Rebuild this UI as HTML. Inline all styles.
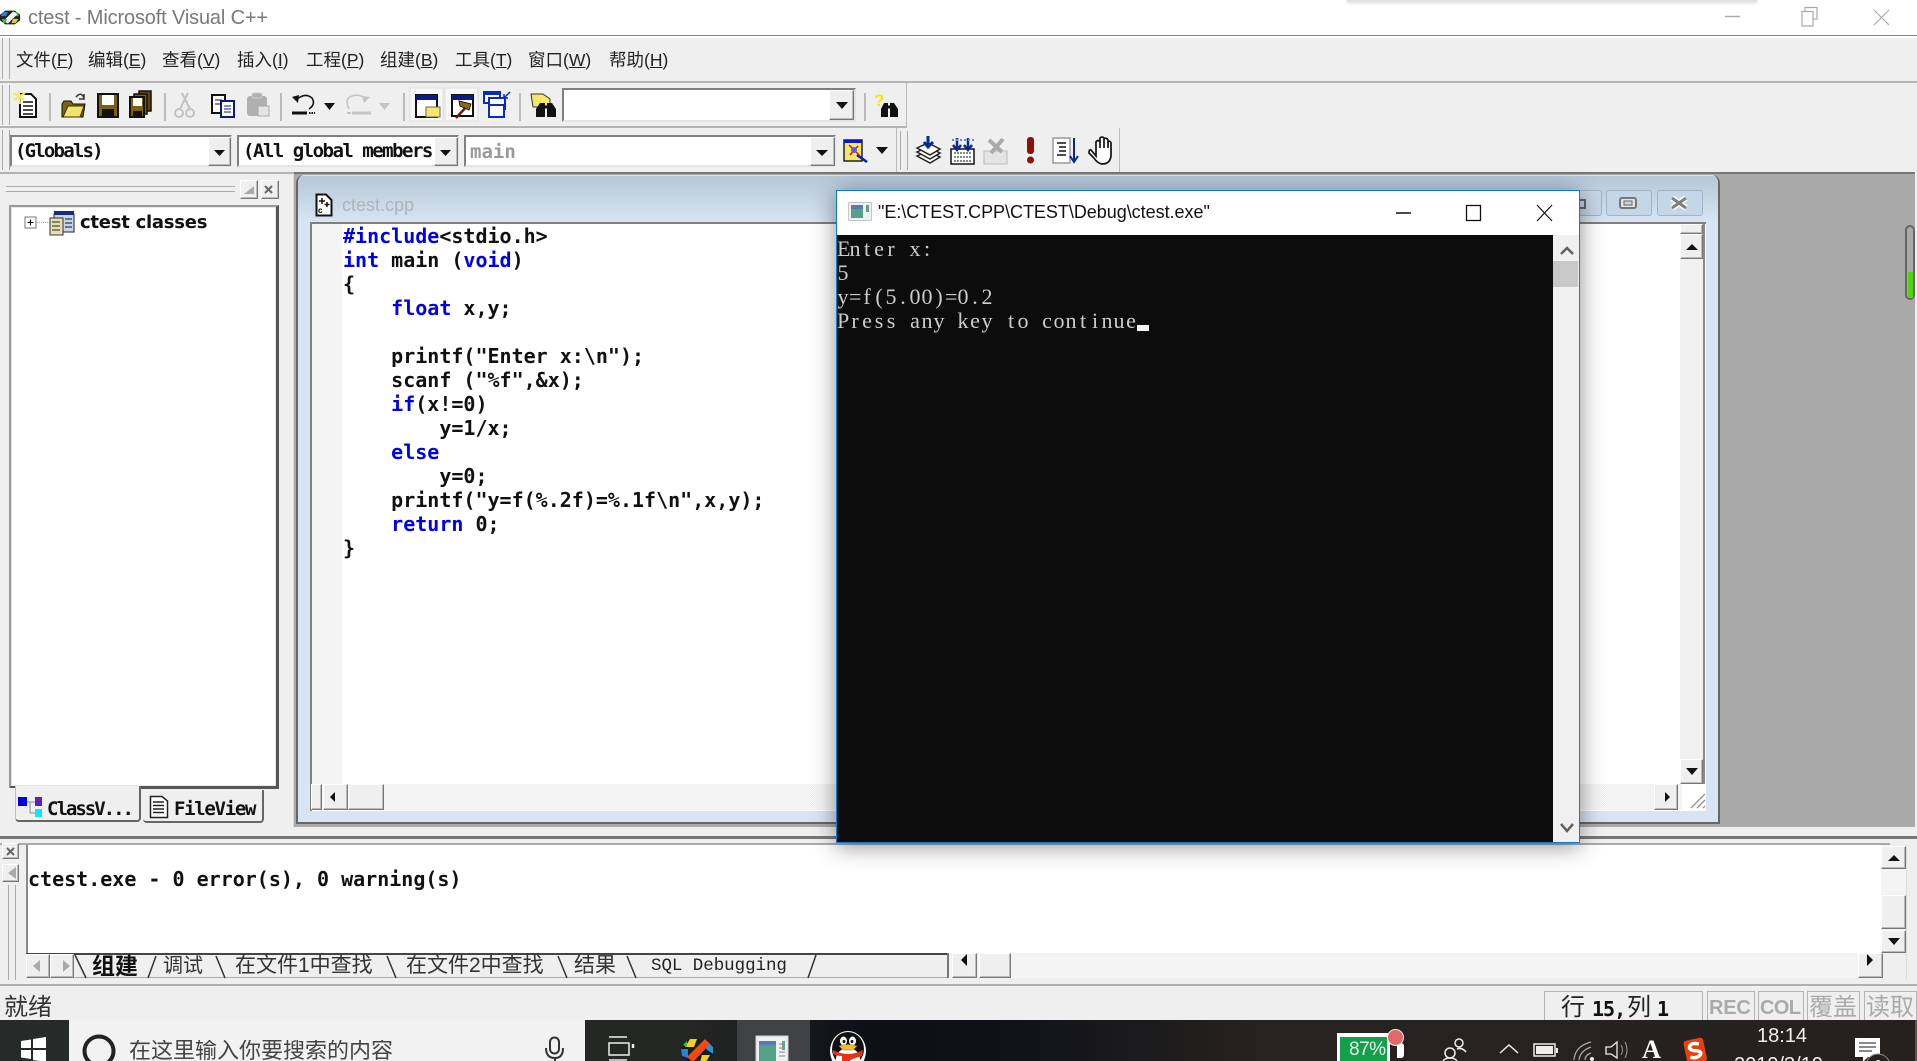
<!DOCTYPE html>
<html lang="zh"><head><meta charset="utf-8"><title>ctest - Microsoft Visual C++</title>
<style>
html,body{margin:0;padding:0;background:#fff;overflow:hidden}
#r{position:relative;width:1917px;height:1061px;overflow:hidden;background:#efefef;font-family:"Liberation Sans","Noto Sans CJK SC",sans-serif}
#r div,#r span.t,#r svg{position:absolute}
.t{position:absolute;white-space:pre;line-height:1}
.b{box-sizing:border-box;background:#efefef;border:1px solid;border-color:#fff #777 #777 #fff;box-shadow:inset -1px -1px 0 #bbb}
.s{box-sizing:border-box;border:2px solid;border-color:#808080 #e4e4e4 #e4e4e4 #808080;background:#fff}
.d{background-color:#f4f4f4;background-image:repeating-conic-gradient(#efefef 0 25%,#f8f8f8 0 50%);background-size:2px 2px}
.m{font-size:17.500px;color:#222}
.fx{font-family:"DejaVu Sans Mono","Liberation Mono",monospace;font-weight:bold;font-size:20px;color:#111}
.k{color:#0000f0}
.c{font-family:"Liberation Serif",serif;font-size:22px;color:#ccc;left:837px}
.c i{display:inline-block;width:12px;text-align:center;font-style:normal}
.g{color:#aaa;font-weight:bold}
</style></head><body><div id="r">

<!-- title bar -->
<div style="left:0;top:0;width:1917px;height:35px;background:#fff"></div>
<div style="left:1347px;top:0;width:410px;height:2px;background:#e2e2e2;box-shadow:0 1px 3px #ccc"></div>
<div style="left:0;top:35px;width:1917px;height:1px;background:#888"></div>
<div style="left:0;top:36px;width:1917px;height:2px;background:#fff"></div>
<svg style="left:0;top:10px" width="21" height="15" viewBox="0 0 24 22" preserveAspectRatio="none"><polygon points="6,1 17,1 23,7 23,15 17,21 6,21 0,15 0,7" fill="#222"/><polygon points="3,3 9,3 7,9 1,9" fill="#2b7fd6"/><polygon points="14,3 19,3 22,9 17,9" fill="#3ab54a"/><polygon points="15,2 20,6 9,20 4,16" fill="#f2f2f2"/><polygon points="2,13 8,13 6,19 4,19" fill="#3ab54a"/><polygon points="15,13 21,13 18,19 13,19" fill="#e8d020"/></svg>
<span class="t" style="left:28px;top:8px;font-size:20px;color:#7a7a7a;letter-spacing:-.15px">ctest - Microsoft Visual C++</span>
<svg style="left:1725px;top:6px" width="170" height="22" fill="none"><path d="M0 10.500H15" stroke="#aaa" stroke-width="1.500"/><path d="M80 5.500V1.500H92V13H88M77 5.500H88V20H77Z" stroke="#aaa" stroke-width="1.200"/><path d="M149 4L164 19M164 4L149 19" stroke="#aaa" stroke-width="1.200"/></svg>

<!-- menu bar -->
<div style="left:2px;top:38px;width:6px;height:41px;border-left:1px solid #aaa;border-right:1px solid #aaa"></div>
<span class="t m" style="left:16px;top:52px">文件(<u>F</u>)</span>
<span class="t m" style="left:88px;top:52px">编辑(<u>E</u>)</span>
<span class="t m" style="left:162px;top:52px">查看(<u>V</u>)</span>
<span class="t m" style="left:237px;top:52px">插入(<u>I</u>)</span>
<span class="t m" style="left:306px;top:52px">工程(<u>P</u>)</span>
<span class="t m" style="left:380px;top:52px">组建(<u>B</u>)</span>
<span class="t m" style="left:455px;top:52px">工具(<u>T</u>)</span>
<span class="t m" style="left:528px;top:52px">窗口(<u>W</u>)</span>
<span class="t m" style="left:609px;top:52px">帮助(<u>H</u>)</span>
<div style="left:0;top:81px;width:1917px;height:2px;background:#b4b4b4"></div>

<!-- toolbar 1 -->
<div style="left:2px;top:85px;width:6px;height:40px;border-left:1px solid #aaa;border-right:1px solid #aaa"></div>
<div style="left:0;top:126px;width:907px;height:2px;background:#b4b4b4"></div>
<div style="left:906px;top:83px;width:1px;height:44px;background:#bbb"></div>
<div style="left:562px;top:88px;width:294px;height:34px" class="s"></div>
<div class="b" style="left:829px;top:90px;width:25px;height:30px"></div>
<svg style="left:0;top:83px" width="920" height="45">
 <g stroke="#aaa" stroke-width="1.500"><path d="M50 10V38M165 10V38M281 10V38M404 10V38M520 10V38M865 10V38"/></g>
 <!-- new -->
 <path d="M20 11H31L36 16V34H20Z" fill="#fff" stroke="#111" stroke-width="2"/><path d="M23 19H33M23 23H33M23 27H33M23 31H33" stroke="#111" stroke-width="1.500"/><path d="M13 10L24 17M19 8L20 21M14 17L25 10" stroke="#f5e76a" stroke-width="2"/>
 <!-- open -->
 <path d="M62 21V34H83L85 21H73L71 18H64Z" fill="#7a6210" stroke="#111"/><path d="M65 35L70 24H86L82 35Z" fill="#f3e36a" stroke="#3b2f00" transform="translate(-2,-1)"/><path d="M76 14Q81 8 84 15M84 11V16H79" fill="none" stroke="#333" stroke-width="1.500"/>
 <!-- save -->
 <rect x="98" y="11" width="20" height="23" fill="#7a6210" stroke="#111" stroke-width="2"/><rect x="102" y="12" width="12" height="10" fill="#fff"/><rect x="102" y="26" width="12" height="7" fill="#111"/>
 <!-- save all -->
 <rect x="139" y="8" width="12" height="20" fill="#5a480a" stroke="#111" stroke-width="1.500"/><rect x="134" y="11" width="13" height="20" fill="#7a6210" stroke="#111" stroke-width="1.500"/><rect x="130" y="14" width="14" height="20" fill="#7a6210" stroke="#111" stroke-width="2"/><rect x="133" y="15" width="9" height="8" fill="#fff"/><rect x="133" y="28" width="9" height="5" fill="#111"/>
 <!-- cut -->
 <g stroke="#c2c2c2" stroke-width="2" fill="none"><path d="M182 10L190 26M188 10L180 26"/><circle cx="179" cy="30" r="4"/><circle cx="190" cy="30" r="4"/></g>
 <!-- copy -->
 <rect x="212" y="12" width="13" height="18" fill="#fff" stroke="#111" stroke-width="2"/><path d="M215 17H222M215 21H222" stroke="#111"/><rect x="221" y="18" width="13" height="16" fill="#fff" stroke="#0a1a8a" stroke-width="2"/><path d="M224 23H231M224 26H231M224 29H231" stroke="#0a1a8a"/>
 <!-- paste -->
 <rect x="247" y="13" width="20" height="20" rx="3" fill="#b0b0b0"/><rect x="252" y="10" width="10" height="5" rx="2" fill="#b0b0b0" stroke="#ccc"/><rect x="258" y="23" width="11" height="10" fill="#e4e4e4" stroke="#aaa"/>
 <!-- undo -->
 <path d="M296 17Q305 9 312 15Q316 21 309 26" fill="none" stroke="#111" stroke-width="1.500"/><path d="M292 14L298 20L299 12Z" fill="#111"/><path d="M292 30H307" stroke="#111" stroke-width="3"/><path d="M309 30H315" stroke="#111" stroke-width="2" stroke-dasharray="1.500 1"/><path d="M324 20H335L329.500 27Z" fill="#111"/>
 <!-- redo -->
 <path d="M349 26Q344 15 352 13Q360 10 366 17" fill="none" stroke="#c4c4c4" stroke-width="1.500"/><path d="M370 14L364 20L362 13Z" fill="#c4c4c4"/><path d="M352 30H371" stroke="#c4c4c4" stroke-width="3"/><path d="M347 30H351" stroke="#c4c4c4" stroke-width="2"/><path d="M379 20H390L384.500 27Z" fill="#c4c4c4"/>
 <!-- workspace toggle -->
 <rect x="410" y="5" width="33" height="33" fill="#f7f7f7" stroke="#ddd"/><rect x="416" y="12" width="21" height="22" fill="#fff" stroke="#111" stroke-width="2"/><rect x="416" y="12" width="21" height="5" fill="#0a1a8a"/><rect x="426" y="24" width="14" height="10" fill="#f5e76a" stroke="#666"/>
 <!-- output toggle -->
 <rect x="445" y="5" width="33" height="33" fill="#f7f7f7" stroke="#ddd"/><rect x="452" y="12" width="21" height="21" fill="#fff" stroke="#111" stroke-width="2"/><rect x="452" y="12" width="21" height="5" fill="#0a1a8a"/><path d="M468 22L456 35" stroke="#6b1a10" stroke-width="2.500"/><path d="M459 18L471 21L469 27L460 23Z" fill="#8a6a10" stroke="#222"/>
 <!-- windows -->
 <rect x="484" y="9" width="16" height="11" fill="#fff" stroke="#0a2ac0" stroke-width="2"/><rect x="489" y="15" width="16" height="11" fill="#fff" stroke="#0a2ac0" stroke-width="2"/><rect x="484" y="9" width="16" height="3" fill="#0a2ac0"/><rect x="489" y="22" width="15" height="12" fill="#fff" stroke="#0a2ac0" stroke-width="2"/><path d="M510 9L504 15M504 11V15H508" stroke="#0a2ac0" stroke-width="1.500" fill="none"/>
 <!-- find -->
 <path d="M531 11H543L550 16V24H533Z" fill="#f5e76a" stroke="#333"/><g fill="#111"><path d="M540 20H545V34H536V26ZM547 20H552L556 26V34H547Z"/></g><path d="M545 24H547" stroke="#111" stroke-width="3"/>
 <!-- combobox arrow -->
 <path d="M836 19H848L842 26Z" fill="#111"/>
 <!-- find in files -->
 <text x="874" y="23" font-family="Liberation Sans" font-size="17" font-weight="bold" fill="#f5e800">?</text>
 <g fill="#111"><path d="M884 20H888V34H881V26ZM890 20H894L898 26V34H890Z"/></g><path d="M888 24H890" stroke="#111" stroke-width="3"/>
</svg>

<!-- toolbar 2 -->
<div style="left:2px;top:130px;width:6px;height:40px;border-left:1px solid #aaa;border-right:1px solid #aaa"></div>
<div class="s" style="left:10px;top:135px;width:222px;height:32px"></div>
<div class="s" style="left:237px;top:135px;width:222px;height:32px"></div>
<div class="s" style="left:464px;top:135px;width:372px;height:32px"></div>
<span class="t fx" style="left:15px;top:142px;font-size:19px;letter-spacing:-1.800px">(Globals)</span>
<div style="left:240px;top:137px;width:193px;height:28px;overflow:hidden"><span class="t fx" style="left:3px;top:5px;font-size:19px;letter-spacing:-1.500px">(All global members</span></div>
<span class="t fx" style="left:470px;top:143px;font-size:19px;color:#999">main</span>
<div class="b" style="left:208px;top:137px;width:23px;height:29px"></div>
<div class="b" style="left:434px;top:137px;width:24px;height:29px"></div>
<div class="b" style="left:810px;top:137px;width:25px;height:29px"></div>
<div style="left:896px;top:128px;width:224px;height:44px;border-left:1px solid #bbb;border-right:1px solid #bbb;box-sizing:border-box"></div>
<div style="left:900px;top:131px;width:6px;height:39px;border-left:1px solid #aaa;border-right:1px solid #aaa"></div>
<svg style="left:0;top:128px" width="1125" height="45">
 <path d="M214 22H225L219.500 28Z M440 22H451L445.500 28Z M816 22H828L822 28Z M876 19H888L882 26Z" fill="#111"/>
 <!-- wizard -->
 <rect x="844" y="12" width="18" height="21" fill="#f5e76a" stroke="#222" stroke-width="1.500"/><rect x="844" y="12" width="18" height="3" fill="#0a1ac0"/><path d="M849 17L859 27M850 27L858 18" stroke="#e01010" stroke-width="1.500"/><circle cx="854" cy="22" r="3" fill="#6a5ac0"/><path d="M857 27L867 34" stroke="#0a1ac0" stroke-width="2.500"/>
 <!-- compile stack -->
 <g fill="#fff" stroke="#222" stroke-width="1.500"><path d="M917 28L930 35L940 29L928 23Z"/><path d="M917 24L930 31L940 25L928 19Z"/><path d="M917 20L930 27L940 21L928 15Z"/></g><path d="M928 8V18M924 14L928 19L933 14" stroke="#0a2a90" stroke-width="3" fill="none"/>
 <!-- build -->
 <rect x="951" y="21" width="23" height="15" fill="#fff" stroke="#111" stroke-width="1.500"/><path d="M954 25H971M954 29H971M954 33H971" stroke="#111" stroke-dasharray="2 1"/><path d="M957 10V20M953 17L957 22L961 17M968 10V20M964 17L968 22L972 17" stroke="#0a2a90" stroke-width="2.500" fill="none"/><path d="M952 12H974" stroke="#6a8ad0" stroke-width="2" stroke-dasharray="2 2"/>
 <!-- stop -->
 <rect x="984" y="23" width="23" height="13" fill="#e4e4e4" stroke="#bbb"/><path d="M989 12L1002 24M1003 11L991 25" stroke="#aaa" stroke-width="4"/>
 <!-- exec -->
 <rect x="1027" y="9" width="7" height="17" rx="3" fill="#8a1208"/><circle cx="1030.500" cy="32" r="3.500" fill="#8a1208"/>
 <!-- go -->
 <rect x="1053" y="10" width="17" height="25" fill="#fff" stroke="#9a9a9a" stroke-width="1.500"/><path d="M1057 15H1066M1059 19H1066M1059 23H1066M1057 27H1066" stroke="#111" stroke-width="1.500"/><path d="M1074 10V33M1070 28L1074 34L1078 28" stroke="#0a2a90" stroke-width="2" fill="none"/>
 <!-- hand -->
 <path d="M1091 22L1096 28V14Q1098 11 1100 14V20V10Q1102 8 1104 10V20V11Q1106 9 1108 12V20V14Q1110 12 1111 15V28Q1110 36 1102 36Q1097 35 1094 30L1089 25Q1089 21 1091 22Z" fill="#fff" stroke="#111" stroke-width="1.700"/>
</svg>
<div style="left:0;top:172px;width:294px;height:2px;background:#b4b4b4"></div>

<!-- MDI background -->
<div style="left:294px;top:172px;width:1621px;height:656px;background:#a9a9a9;border-top:2px solid #777;box-sizing:border-box"></div>
<div style="left:1915px;top:172px;width:2px;height:656px;background:#efefef"></div>

<!-- MDI child window -->
<div style="left:296px;top:175px;width:1424px;height:649px;box-sizing:border-box;border-left:2px solid #666;border-right:2px solid #666;border-bottom:2px solid #666;background:#d8e4f1;border-radius:8px 8px 0 0"></div>
<div style="left:298px;top:176px;width:1420px;height:46px;border-radius:6px 6px 0 0;background:linear-gradient(#b5c7d8,#d8e4f1)"></div>
<svg style="left:314px;top:193px" width="20" height="24"><path d="M2.500 1.500H12L17.500 7V22.500H2.500Z" fill="#fff" stroke="#111" stroke-width="2"/><path d="M8 5V11M5 8H11M13 9V14M10.500 11.500H15.500" stroke="#111" stroke-width="1.500"/><text x="4" y="20" font-size="8" font-weight="bold" font-family="Liberation Sans">c</text></svg>
<span class="t" style="left:342px;top:196px;font-size:18px;color:#aeb4ba">ctest.cpp</span>
<div style="left:1572px;top:190px;width:30px;height:26px;box-sizing:border-box;border:1px solid #9fb2c8;border-radius:3px;background:#c5d6e8"></div>
<div style="left:1606px;top:190px;width:46px;height:26px;box-sizing:border-box;border:1px solid #9fb2c8;border-radius:3px;background:#c5d6e8"></div>
<div style="left:1657px;top:190px;width:46px;height:26px;box-sizing:border-box;border:1px solid #9fb2c8;border-radius:3px;background:#c5d6e8"></div>
<svg style="left:1570px;top:190px" width="140" height="26"><rect x="9" y="10" width="6" height="8" fill="none" stroke="#666" stroke-width="2"/><rect x="50" y="8" width="16" height="10" rx="2" fill="#e4e4e4" stroke="#777" stroke-width="2"/><rect x="54" y="11" width="8" height="4" fill="#c5d6e8" stroke="#666"/><path d="M102 8L116 18M116 8L102 18" stroke="#fff" stroke-width="6"/><path d="M102 8L116 18M116 8L102 18" stroke="#808080" stroke-width="3"/></svg>

<!-- editor -->
<div style="left:310px;top:222px;width:1396px;height:589px;background:#fff;box-sizing:border-box;border-top:2px solid #808080;border-left:2px solid #808080"></div>
<div class="d" style="left:312px;top:224px;width:30px;height:560px"></div>
<pre class="t fx" style="left:343px;top:224px;margin:0;line-height:24px"><span class="k">#include</span>&lt;stdio.h&gt;
<span class="k">int</span> main (<span class="k">void</span>)
{
    <span class="k">float</span> x,y;

    printf("Enter x:\n");
    scanf ("%f",&amp;x);
    <span class="k">if</span>(x!=0)
        y=1/x;
    <span class="k">else</span>
        y=0;
    printf("y=f(%.2f)=%.1f\n",x,y);
    <span class="k">return</span> 0;
}</pre>
<!-- editor scrollbars -->
<div class="d" style="left:312px;top:784px;width:1370px;height:26px"></div>
<div class="b" style="left:311px;top:784px;width:11px;height:26px"></div>
<div class="b" style="left:323px;top:784px;width:25px;height:26px"></div>
<div class="b" style="left:348px;top:784px;width:36px;height:26px"></div>
<div class="b" style="left:1654px;top:784px;width:24px;height:26px"></div>
<div style="left:1680px;top:224px;width:25px;height:560px;background:#f0f0f0;border-right:2px solid #888;box-sizing:border-box"></div>
<div class="b" style="left:1680px;top:224px;width:23px;height:10px"></div>
<div class="b" style="left:1680px;top:234px;width:23px;height:25px"></div>
<div class="b" style="left:1680px;top:759px;width:23px;height:25px"></div>
<svg style="left:320px;top:784px" width="1390" height="28"><path d="M15 8V18L10 13Z" fill="#111"/><path d="M1345 8V18L1350 13Z" fill="#111"/><path d="M1371 24L1385 10M1377 24L1385 16M1383 24L1385 22" stroke="#999" stroke-width="1.500"/></svg>
<svg style="left:1680px;top:234px" width="24" height="550"><path d="M6 16H18L12 10Z M6 534H18L12 541Z" fill="#111"/></svg>

<!-- class view panel -->
<div style="left:0;top:174px;width:294px;height:653px;background:#efefef;border-right:1px solid #d8d8d8;box-sizing:border-box"></div>
<div style="left:6px;top:186px;width:229px;height:4px;border-top:1px solid #aaa;border-bottom:1px solid #aaa"></div>
<div class="b" style="left:240px;top:180px;width:18px;height:19px"></div>
<div class="b" style="left:261px;top:180px;width:18px;height:19px"></div>
<svg style="left:240px;top:180px" width="40" height="20"><path d="M4 14H14V6Z" fill="#aaa"/><path d="M25 6L32 13M32 6L25 13" stroke="#666" stroke-width="2"/></svg>
<div style="left:9px;top:205px;width:270px;height:584px;background:#fff;box-sizing:border-box;border-style:solid;border-width:2px 3px 3px 2px;border-color:#999 #555 #555 #999;box-shadow:inset 0 0 0 1px #e8e8e8"></div>
<svg style="left:22px;top:208px" width="60" height="28"><rect x="3" y="9" width="11" height="11" fill="#fff" stroke="#777"/><path d="M5.500 14.500H11.500M8.500 11.500V17.500" stroke="#111"/><path d="M15 14.500H28" stroke="#aaa" stroke-dasharray="1 1"/><rect x="32" y="6" width="20" height="18" fill="#c5d5ea" stroke="#223"/><rect x="32" y="3" width="20" height="4" fill="#1a2a80"/><path d="M43 11H50M43 15H50M43 19H50" stroke="#111"/><rect x="28" y="10" width="13" height="17" fill="#e7dfb0" stroke="#333"/><path d="M30 14H38M30 18H38M30 22H38" stroke="#223"/></svg>
<span class="t" style="left:80px;top:214px;font-size:18px;font-weight:bold;color:#111;font-family:'DejaVu Sans',sans-serif;letter-spacing:-.25px">ctest classes</span>
<!-- panel tabs -->
<div style="left:9px;top:788px;width:6px;height:4px;background:#efefef"></div>
<div style="left:15px;top:786px;width:126px;height:36px;background:#efefef;border-bottom:2px solid #666;border-right:2px solid #666;border-left:1px solid #bbb;border-radius:0 0 4px 4px;box-sizing:border-box"></div>
<div style="left:143px;top:790px;width:121px;height:33px;background:#efefef;border-bottom:2px solid #666;border-right:2px solid #666;border-radius:0 0 4px 4px;box-sizing:border-box"></div>
<svg style="left:16px;top:795px" width="30" height="24"><rect x="2" y="2" width="9" height="9" fill="#0000e0"/><rect x="19" y="2" width="7" height="9" fill="#6a1ac0"/><rect x="19" y="14" width="7" height="8" fill="#10e8f0"/><path d="M11 7H19M14 7V18H19" stroke="#888" fill="none"/></svg>
<svg style="left:148px;top:794px" width="22" height="26"><path d="M2.500 2.500H14L19.500 7V23.500H2.500Z" fill="#fff" stroke="#222" stroke-width="1.500"/><path d="M5 8H16M5 11.500H16M5 15H16M5 18.500H16" stroke="#222" stroke-width="1.500"/></svg>
<span class="t fx" style="left:47px;top:800px;font-size:19px;letter-spacing:-2px">ClassV...</span>
<span class="t fx" style="left:174px;top:800px;font-size:19px;letter-spacing:-1.300px">FileView</span>

<!-- output panel -->
<div style="left:0;top:827px;width:1917px;height:10px;background:#efefef"></div>
<div style="left:0;top:836px;width:1917px;height:3px;background:#777"></div>
<div style="left:0;top:839px;width:1917px;height:146px;background:#efefef"></div>
<div style="left:0;top:843px;width:1890px;height:2px;background:#aaa"></div>
<div class="b" style="left:2px;top:843px;width:17px;height:16px"></div>
<div class="b" style="left:2px;top:864px;width:17px;height:18px"></div>
<svg style="left:2px;top:842px" width="18" height="44"><path d="M5 6L12 13M12 6L5 13" stroke="#666" stroke-width="2"/><path d="M14 25V37L6 31Z" fill="#aaa"/></svg>
<div style="left:8px;top:885px;width:6px;height:95px;border-left:1px solid #aaa;border-right:1px solid #aaa"></div>
<div style="left:26px;top:845px;width:1855px;height:108px;background:#fff;border-left:2px solid #888;box-sizing:border-box"></div>
<span class="t fx" style="left:28px;top:869px;font-size:20px">ctest.exe - 0 error(s), 0 warning(s)</span>
<!-- output tabs -->
<div style="left:26px;top:953px;width:921px;height:25px;background:#efefef;border-top:2px solid #444;border-bottom:1px solid #aaa;box-sizing:border-box"></div>
<div class="b" style="left:26px;top:954px;width:24px;height:24px"></div>
<div class="b" style="left:50px;top:954px;width:24px;height:24px"></div>
<svg style="left:26px;top:953px" width="800" height="26"><path d="M14 7V19L7 13Z M37 7V19L44 13Z" fill="#aaa"/><g stroke="#333" stroke-width="1.500" fill="none"><path d="M49 2L60 25M130 3L122 25M190 3L199 25M361 3L370 25M532 3L541 25M601 3L610 25M790 2L782 25"/></g></svg>
<span class="t" style="left:92px;top:955px;font-size:23px;font-weight:bold;color:#111">组建</span>
<span class="t" style="left:163px;top:956px;font-size:20px;color:#333">调试</span>
<span class="t" style="left:235px;top:955px;font-size:21px;color:#333">在文件1中查找</span>
<span class="t" style="left:406px;top:955px;font-size:21px;color:#333">在文件2中查找</span>
<span class="t" style="left:574px;top:955px;font-size:21px;color:#333">结果</span>
<span class="t" style="left:651px;top:958px;font-size:17.500px;color:#222;font-family:'Liberation Mono',monospace;letter-spacing:-.05px">SQL Debugging</span>
<!-- output scrollbars -->
<div class="d" style="left:947px;top:953px;width:911px;height:25px"></div>
<div style="left:947px;top:953px;width:2px;height:25px;background:#777"></div>
<div class="b" style="left:952px;top:953px;width:25px;height:25px"></div>
<div class="b" style="left:979px;top:953px;width:32px;height:25px"></div>
<div class="b" style="left:1858px;top:953px;width:25px;height:25px"></div>
<div class="d" style="left:1881px;top:868px;width:25px;height:28px"></div>
<div class="b" style="left:1881px;top:846px;width:25px;height:23px"></div>
<div class="b" style="left:1881px;top:895px;width:25px;height:34px"></div>
<div class="b" style="left:1881px;top:930px;width:25px;height:23px"></div>
<div style="left:1906px;top:845px;width:1px;height:135px;background:#ddd"></div>
<svg style="left:950px;top:846px" width="960" height="132"><path d="M17 108V120L11 114Z M917 108V120L923 114Z M938 15H950L944 9Z M938 92H950L944 99Z" fill="#111"/></svg>
<div style="left:0;top:984px;width:1917px;height:2px;background:#b0b0b0"></div>

<!-- status bar -->
<div style="left:0;top:986px;width:1917px;height:34px;background:#efefef"></div>
<span class="t" style="left:4px;top:996px;font-size:24px;color:#333">就绪</span>
<div style="left:1544px;top:991px;width:159px;height:32px;box-sizing:border-box;border:1px solid #b4b4b4"></div>
<div style="left:1707px;top:991px;width:48px;height:32px;box-sizing:border-box;border:1px solid #b4b4b4"></div>
<div style="left:1758px;top:991px;width:46px;height:32px;box-sizing:border-box;border:1px solid #b4b4b4"></div>
<div style="left:1807px;top:991px;width:53px;height:32px;box-sizing:border-box;border:1px solid #b4b4b4"></div>
<div style="left:1864px;top:991px;width:53px;height:32px;box-sizing:border-box;border:1px solid #b4b4b4"></div>
<span class="t" style="left:1561px;top:996px;font-size:24px;color:#222">行</span>
<span class="t fx" style="left:1592px;top:999px;font-size:20px;letter-spacing:-1px">15,</span>
<span class="t" style="left:1627px;top:996px;font-size:24px;color:#222">列</span>
<span class="t fx" style="left:1657px;top:999px;font-size:20px">1</span>
<span class="t g" style="left:1709px;top:998px;font-size:20px;letter-spacing:-.2px">REC</span>
<span class="t g" style="left:1760px;top:998px;font-size:20px;letter-spacing:-.6px">COL</span>
<span class="t" style="left:1809px;top:996px;font-size:24px;color:#aaa">覆盖</span>
<span class="t" style="left:1866px;top:996px;font-size:24px;color:#aaa">读取</span>

<!-- taskbar -->
<div style="left:0;top:1020px;width:1917px;height:41px;background:linear-gradient(90deg,#252725 0,#252725 36%,#0e1016 45%,#0f1118 52%,#26221f 66%,#26211f 100%);overflow:hidden"></div>
<div style="left:0;top:1020px;width:69px;height:41px;background:#262a28"></div>
<svg style="left:20px;top:1036px" width="27" height="25"><path d="M1 5L11 3.500V12H1ZM13 3L26 1V12H13ZM1 14H11V23L1 21.500ZM13 14H26V26L13 24Z" fill="#fff"/></svg>
<div style="left:69px;top:1020px;width:516px;height:41px;background:#f2f2f2"></div>
<svg style="left:78px;top:1030px" width="44" height="31"><circle cx="21" cy="21" r="14.500" fill="none" stroke="#222" stroke-width="4"/></svg>
<span class="t" style="left:129px;top:1040px;font-size:22px;color:#444;height:21px;overflow:hidden">在这里输入你要搜索的内容</span>
<svg style="left:544px;top:1036px" width="22" height="25"><rect x="6" y="1.500" width="9" height="16" rx="4.500" fill="none" stroke="#333" stroke-width="2"/><path d="M2 12Q2 22 11 22Q19 22 19 12M11 22V26" fill="none" stroke="#333" stroke-width="2"/></svg>
<svg style="left:607px;top:1034px" width="30" height="27"><path d="M2 3H20M2 9H22V21H2ZM2 26H20" fill="none" stroke="#eee" stroke-width="1.500"/><path d="M26 10V14" stroke="#eee" stroke-width="2.500"/></svg>
<svg style="left:680px;top:1038px" width="36" height="23"><polygon points="9,1 26,1 34,9 34,18 26,26 9,26 1,18 1,9" fill="#1c1c1c"/><polygon points="10,1 17,1 14,9 5,9" fill="#f0d020"/><polygon points="1,11 8,11 8,20 2,18" fill="#2a7fd6"/><polygon points="27,3 33,9 33,16 26,11" fill="#2a90e0"/><polygon points="3,7 7,3 7,9" fill="#40c030"/><polygon points="25,1 30,6 13,24 7,19" fill="#f04a14"/><polygon points="22,17 30,17 26,24 20,24" fill="#f0d020"/></svg>
<div style="left:737px;top:1020px;width:73px;height:41px;background:#404144"></div>
<svg style="left:755px;top:1035px" width="35" height="26"><rect x="1" y="1" width="32" height="26" fill="#f0f0f0" stroke="#cfcfcf"/><rect x="4" y="6" width="17" height="22" fill="#55a088"/><rect x="4" y="6" width="17" height="4" fill="#5a7ab0"/><path d="M24 9H30M24 13H30M24 17H30M24 21H30" stroke="#bbb" stroke-width="2"/><rect x="27" y="6" width="3" height="9" fill="#6aa090"/></svg>
<svg style="left:828px;top:1031px" width="40" height="30"><ellipse cx="20" cy="20" rx="18" ry="20" fill="#fff"/><ellipse cx="20" cy="18" rx="16" ry="17" fill="#111"/><ellipse cx="20" cy="28" rx="12" ry="11" fill="#fff"/><ellipse cx="15.500" cy="10" rx="3.500" ry="4.500" fill="#fff"/><ellipse cx="24.500" cy="10" rx="3.500" ry="4.500" fill="#fff"/><circle cx="16" cy="10.500" r="1.500" fill="#111"/><circle cx="24" cy="10.500" r="1.500" fill="#111"/><path d="M11 15Q20 12 29 15L25 19H15Z" fill="#f0c020" stroke="#a07010" stroke-width=".5"/><path d="M5 19Q20 27 35 19L34 25Q20 29 22 30H14V25Q8 25 5 23Z" fill="#e8301a"/></svg>
<div style="left:1915px;top:1020px;width:2px;height:41px;background:#555"></div>

<!-- tray -->
<div style="left:1337px;top:1033px;width:53px;height:28px;background:#fff"></div>
<div style="left:1340px;top:1037px;width:47px;height:24px;background:#12a04a"></div>
<div style="left:1397px;top:1043px;width:7px;height:15px;background:#fff;border-radius:0 3px 3px 0"></div>
<span class="t" style="left:1349px;top:1040px;font-size:19px;color:#eee;letter-spacing:-.5px">87%</span>
<div style="left:1387px;top:1029px;width:15px;height:15px;border-radius:50%;background:#e06868;border:1px solid #f2f2f2"></div>
<svg style="left:1440px;top:1032px" width="477" height="29" fill="none" stroke="#eee">
 <circle cx="19" cy="11" r="4" stroke-width="1.500"/><circle cx="10" cy="21" r="5" stroke-width="1.500"/><path d="M3 29Q5 26 10 26Q15 26 17 29M17 17Q22 15 26 20" stroke-width="1.500"/>
 <path d="M60 21L69 13L78 21" stroke-width="1.500"/>
 <rect x="94" y="12" width="21" height="12" stroke-width="1.500"/><rect x="96" y="14" width="17" height="8" fill="#eee" stroke="none"/><rect x="116" y="16" width="2" height="5" fill="#eee" stroke="none"/>
 <path d="M134 28Q135 14 151 10M139 28Q140 19 151 15M145 28Q145 23 151 21" stroke="#aaa" stroke-width="1.200"/><circle cx="152" cy="27" r="2" fill="#eee" stroke="none"/>
 <path d="M166 15H171L177 10V26L171 22H166Z" stroke-width="1.300"/><path d="M181 13Q184 18 181 23M185 10Q189 18 185 26" stroke="#999"/>
 <text x="202" y="26" font-family="Liberation Serif" font-size="26" font-weight="bold" fill="#fff" stroke="none" textLength="19" lengthAdjust="spacingAndGlyphs">A</text>
 <g transform="rotate(-12 255 18)"><rect x="245" y="7" width="20" height="24" rx="3" fill="#e8400f" stroke="none"/><path d="M260 13Q251 9 250 15Q251 18 256 19Q262 21 259 24Q254 27 249 24" stroke="#fff" stroke-width="3.500"/></g>
 <path d="M415 6H440V25H428L423 30V25H415Z" fill="#fff" stroke="none"/><path d="M419 11H436M419 15H436M419 19H432" stroke="#444" stroke-width="1.300"/>
 <circle cx="438" cy="34" r="12" fill="#26211f" stroke="#888" stroke-width="1"/>
 <text x="434" y="38" font-family="Liberation Sans" font-size="15" font-weight="bold" fill="#fff" stroke="none">1</text>
</svg>
<span class="t" style="left:1757px;top:1026px;font-size:20px;color:#f0f0f0">18:14</span>
<svg style="left:1730px;top:1040px" width="110" height="21"><text x="4" y="31" font-family="Liberation Sans" font-size="20" fill="#f0f0f0">2019/3/19</text></svg>

<!-- console -->
<div style="left:836px;top:190px;width:744px;height:653px;background:#fff;border:1px solid #0a7ad4;box-shadow:0 3px 22px rgba(0,0,0,.45);box-sizing:border-box"></div>
<div style="left:837px;top:235px;width:716px;height:607px;background:#0c0c0c"></div>
<div style="left:1553px;top:235px;width:26px;height:607px;background:#f0f0f0"></div>
<div style="left:1553px;top:261px;width:25px;height:26px;background:#c8c8c8"></div>
<svg style="left:1553px;top:235px" width="26" height="607" fill="none" stroke="#606060" stroke-width="2.500"><path d="M8 19L14 13L20 19"/><path d="M8 589L14 596L20 589"/></svg>
<svg style="left:848px;top:202px" width="24" height="19"><rect x=".5" y=".5" width="23" height="18" rx="1" fill="#f0f0f0" stroke="#c4c4c4"/><rect x="3" y="3" width="12" height="13" fill="#55a088"/><rect x="3" y="3" width="12" height="4" fill="#5a7ab0"/><rect x="18" y="3" width="3" height="7" fill="#6a9a90"/></svg>
<span class="t" style="left:878px;top:203px;font-size:18px;color:#111;letter-spacing:-.03px">"E:\CTEST.CPP\CTEST\Debug\ctest.exe"</span>
<svg style="left:1390px;top:200px" width="170" height="26" fill="none" stroke="#111"><path d="M6 13H21" stroke-width="1.500"/><rect x="76.500" y="5.500" width="14" height="15" stroke-width="1.300"/><path d="M147 5L162 21M162 5L147 21" stroke-width="1.200"/></svg>
<span class="t c" style="top:237px;line-height:24px"><i>E</i><i>n</i><i>t</i><i>e</i><i>r</i><i> </i><i>x</i><i>:</i></span>
<span class="t c" style="top:261px;line-height:24px"><i>5</i></span>
<span class="t c" style="top:285px;line-height:24px"><i>y</i><i>=</i><i>f</i><i>(</i><i>5</i><i>.</i><i>0</i><i>0</i><i>)</i><i>=</i><i>0</i><i>.</i><i>2</i></span>
<span class="t c" style="top:309px;line-height:24px"><i>P</i><i>r</i><i>e</i><i>s</i><i>s</i><i> </i><i>a</i><i>n</i><i>y</i><i> </i><i>k</i><i>e</i><i>y</i><i> </i><i>t</i><i>o</i><i> </i><i>c</i><i>o</i><i>n</i><i>t</i><i>i</i><i>n</i><i>u</i><i>e</i></span>
<div style="left:1137px;top:325px;width:12px;height:6px;background:#f2f2f2"></div>

<!-- right side indicator -->
<div style="left:1905px;top:225px;width:10px;height:75px;box-sizing:border-box;border:2px solid #666;border-radius:5px;background:#a9a9a9"></div>
<div style="left:1908px;top:272px;width:5px;height:26px;background:#50d410"></div>

</div></body></html>
